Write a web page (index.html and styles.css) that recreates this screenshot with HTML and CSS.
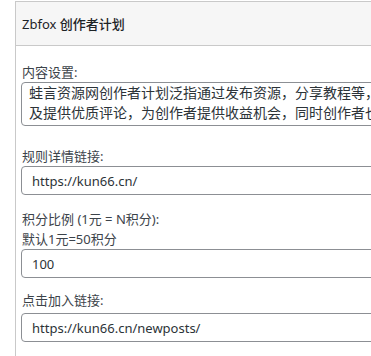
FILE: index.html
```html
<!DOCTYPE html>
<html lang="zh-CN">
<head>
<meta charset="utf-8">
<link rel="stylesheet" href="styles.css">
</head>
<body>
<div class="postbox">
  <div class="postbox-header">
    <h2 class="title">Zbfox <span class="title-cjk">创作者计划</span></h2>
  </div>
  <div class="inside">
    <div class="field field-first">
      <label class="label">内容设置:</label>
      <textarea class="textarea" rows="2">蛙言资源网创作者计划泛指通过发布资源，分享教程等，及提供优质评论，为创作者提供收益机会，同时创作者也</textarea>
    </div>
    <div class="field field-second">
      <label class="label">规则详情链接:</label>
      <input class="input" type="text" value="https://kun66.cn/">
    </div>
    <div class="field field-third">
      <label class="label">积分比例 (1元 = N积分):</label>
      <div class="label">默认1元=50积分</div>
      <input class="input" type="text" value="100">
    </div>
    <div class="field field-fourth">
      <label class="label">点击加入链接:</label>
      <input class="input" type="text" value="https://kun66.cn/newposts/">
    </div>
  </div>
</div>
</body>
</html>
```

FILE: styles.css
```css
html, body {
  margin: 0;
  padding: 0;
  background: #ffffff;
  overflow: hidden;
  width: 371px;
  height: 356px;
}

body {
  font-family: "Noto Sans", "Noto Sans CJK SC", sans-serif;
  color: #3c434a;
}

.postbox {
  margin: 1px 0 0 15px;
  width: 420px;
  border: 1px solid #c9c9c9;
  border-bottom: none;
  height: 400px;
}

.postbox-header {
  height: 43px;
  background: #f6f6f6;
  border-bottom: 1px solid #c9c9c9;
  display: flex;
  align-items: center;
  padding-left: 6px;
}

.title {
  margin: 0;
  font-size: 13px;
  font-weight: 400;
  color: #1d2327;
  line-height: 20px;
}

.title-cjk {
  font-family: "Noto Sans CJK SC", sans-serif;
  font-weight: 500;
}

.inside {
  padding: 0 0 0 5px;
}

.field {
  display: flex;
  flex-direction: column;
  align-items: flex-start;
}

.field-first { padding-top: 16px; }
.field-second { padding-top: 20px; }
.field-third { padding-top: 14px; }
.field-fourth { padding-top: 12px; }

.label {
  font-size: 13px;
  line-height: 20px;
  color: #3c434a;
  padding-left: 1px;
}

.field-fourth .label { margin-bottom: 3px; }

.textarea {
  box-sizing: border-box;
  width: 372px;
  height: 44px;
  margin: 0;
  padding: 0 6px 0 7px;
  border: 1px solid #8c8f94;
  border-radius: 4px;
  font-family: "Noto Sans", "Noto Sans CJK SC", sans-serif;
  font-size: 14px;
  line-height: 20px;
  color: #2c3338;
  resize: none;
  overflow: hidden;
}

.input {
  box-sizing: border-box;
  width: 400px;
  height: 29px;
  margin: 0;
  padding: 0 10px;
  border: 1px solid #8c8f94;
  border-radius: 4px;
  font-family: "Noto Sans", "Noto Sans CJK SC", sans-serif;
  font-size: 13px;
  color: #2c3338;
  background: #fff;
}
```
